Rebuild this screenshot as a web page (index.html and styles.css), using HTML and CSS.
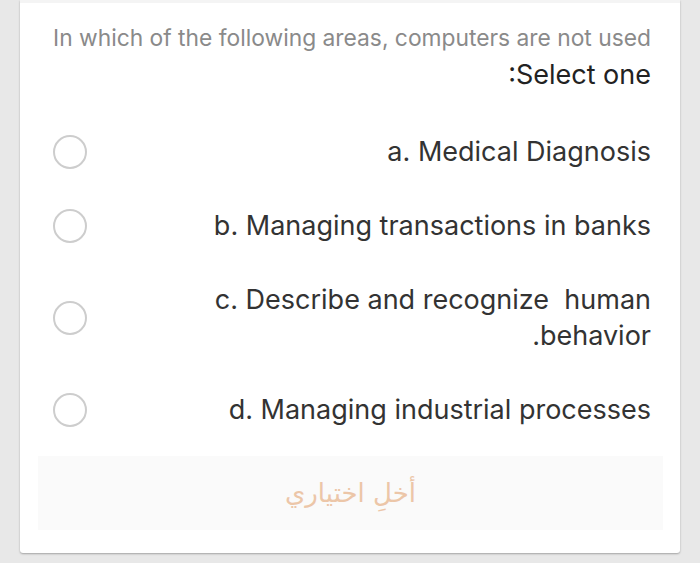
FILE: index.html
```html
<!DOCTYPE html>
<html>
<head>
<meta charset="utf-8">
<link rel="stylesheet" href="styles.css">
</head>
<body>
<div class="card">
  <div class="question">In which of the following areas, computers are not used</div>
  <div class="prompt">:Select one</div>
  <div class="options">
    <div class="option"><span class="radio"></span><div class="label">a. Medical Diagnosis</div></div>
    <div class="option"><span class="radio"></span><div class="label">b. Managing transactions in banks</div></div>
    <div class="option"><span class="radio"></span><div class="label">c. Describe and recognize&nbsp; human<br>.behavior</div></div>
    <div class="option"><span class="radio"></span><div class="label">d. Managing industrial processes</div></div>
  </div>
  <div class="clear-box"><span class="clear">أخلِ اختياري</span></div>
</div>
</body>
</html>
```

FILE: styles.css
```css
html, body {
  margin: 0;
  padding: 0;
}
body {
  background: #e8e8e8;
  width: 700px;
  height: 563px;
  overflow: hidden;
  font-family: Inter, "Noto Sans", sans-serif;
}
.card {
  margin-left: 20px;
  width: 660px;
  height: 553px;
  box-sizing: border-box;
  background: #fff;
  border-top: 3px solid #f4f4f4;
  box-shadow: 0 1px 2px rgba(0,0,0,0.3);
  border-radius: 0 0 3px 3px;
  padding: 22px 29px 0 33px;
  display: flex;
  flex-direction: column;
}
.question {
  color: #8a8a8a;
  font-size: 22.8px;
  line-height: 26px;
  text-align: right;
  white-space: nowrap;
  margin-left: -14px;
}
.prompt {
  color: #222;
  font-size: 27px;
  line-height: 36px;
  text-align: right;
  margin-top: 6px;
}
.options {
  display: flex;
  flex-direction: column;
  gap: 38px;
  margin-top: 41px;
}
.option {
  display: flex;
  align-items: center;
  justify-content: space-between;
}
.radio {
  width: 30px;
  height: 30px;
  border: 2px solid #cdcdcd;
  border-radius: 50%;
  flex: none;
}
.label {
  color: #333;
  font-size: 27px;
  line-height: 36px;
  text-align: right;
}
.clear-box {
  margin: 28px -12px 0 -15px;
  height: 74px;
  background: #fafafa;
  display: flex;
  align-items: center;
  justify-content: center;
}
.clear {
  font-family: "DejaVu Sans", sans-serif;
  color: #ecc6a8;
  font-size: 26px;
}
```
